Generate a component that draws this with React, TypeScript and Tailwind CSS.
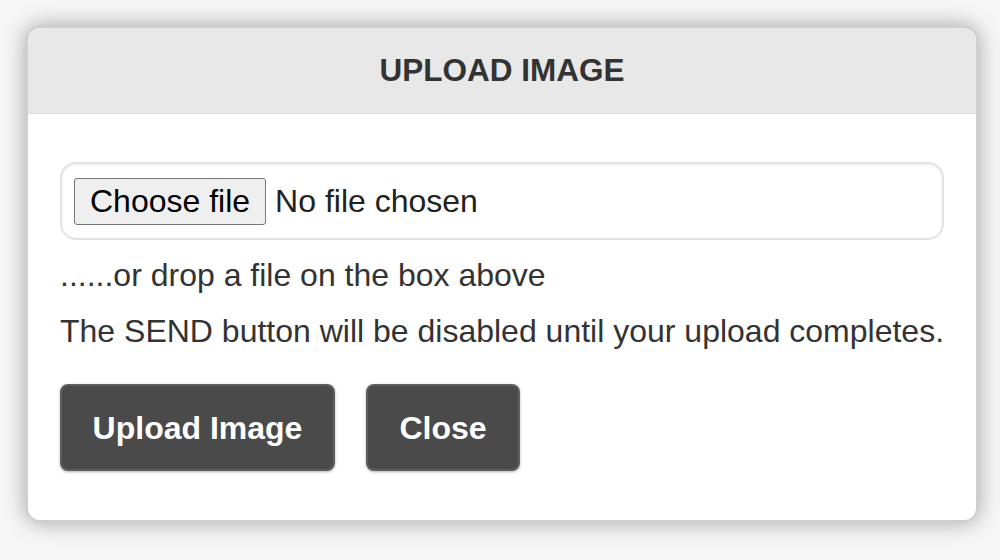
export default function App() {
  return (
    <div
      className="w-[1000px] h-[560px] bg-[#f6f6f6] pt-[26px] pl-[26px]"
      style={{ fontFamily: '"Liberation Sans", Arial, sans-serif' }}
    >
      <div className="w-[952px] h-[496px] bg-white rounded-[14px] border-2 border-[#cfcfcf] shadow-[0_0_22px_rgba(0,0,0,0.35)] overflow-hidden">
        {/* header */}
        <div className="h-[86px] bg-[#e8e8e8] border-b border-[#dcdcdc] flex items-center justify-center">
          <h1 className="text-[31.5px] font-bold text-[#333]">UPLOAD IMAGE</h1>
        </div>

        {/* body */}
        <div className="px-[32px] pt-[48px]">
          <div className="w-[884px] h-[78px] rounded-[16px] border-2 border-[#e2e2e2] shadow-[inset_0_1px_3px_rgba(0,0,0,0.08)] flex items-center pl-[12px]">
            <div className="h-[47px] px-[15px] flex items-center bg-[#efefef] border border-[#767676] rounded-[3px] text-[32px] text-black">
              Choose file
            </div>
            <span className="ml-[9px] text-[32px] text-[#222]">No file chosen</span>
          </div>

          <p className="mt-[15px] text-[32px] leading-[40px] text-[#333] whitespace-nowrap">......or drop a file on the box above</p>
          <p className="mt-[16px] text-[32px] leading-[40px] text-[#333] whitespace-nowrap">
            The SEND button will be disabled until your upload completes.
          </p>

          <div className="mt-[33px] flex gap-[31px]">
            <button className="w-[275px] h-[87px] bg-[#4a4a4a] border-2 border-[#5e5e5e] rounded-[8px] text-white text-[32px] font-bold shadow-[0_1px_3px_rgba(0,0,0,0.3)]">
              Upload Image
            </button>
            <button className="w-[154px] h-[87px] bg-[#4a4a4a] border-2 border-[#5e5e5e] rounded-[8px] text-white text-[32px] font-bold shadow-[0_1px_3px_rgba(0,0,0,0.3)]">
              Close
            </button>
          </div>
        </div>
      </div>
    </div>
  );
}
